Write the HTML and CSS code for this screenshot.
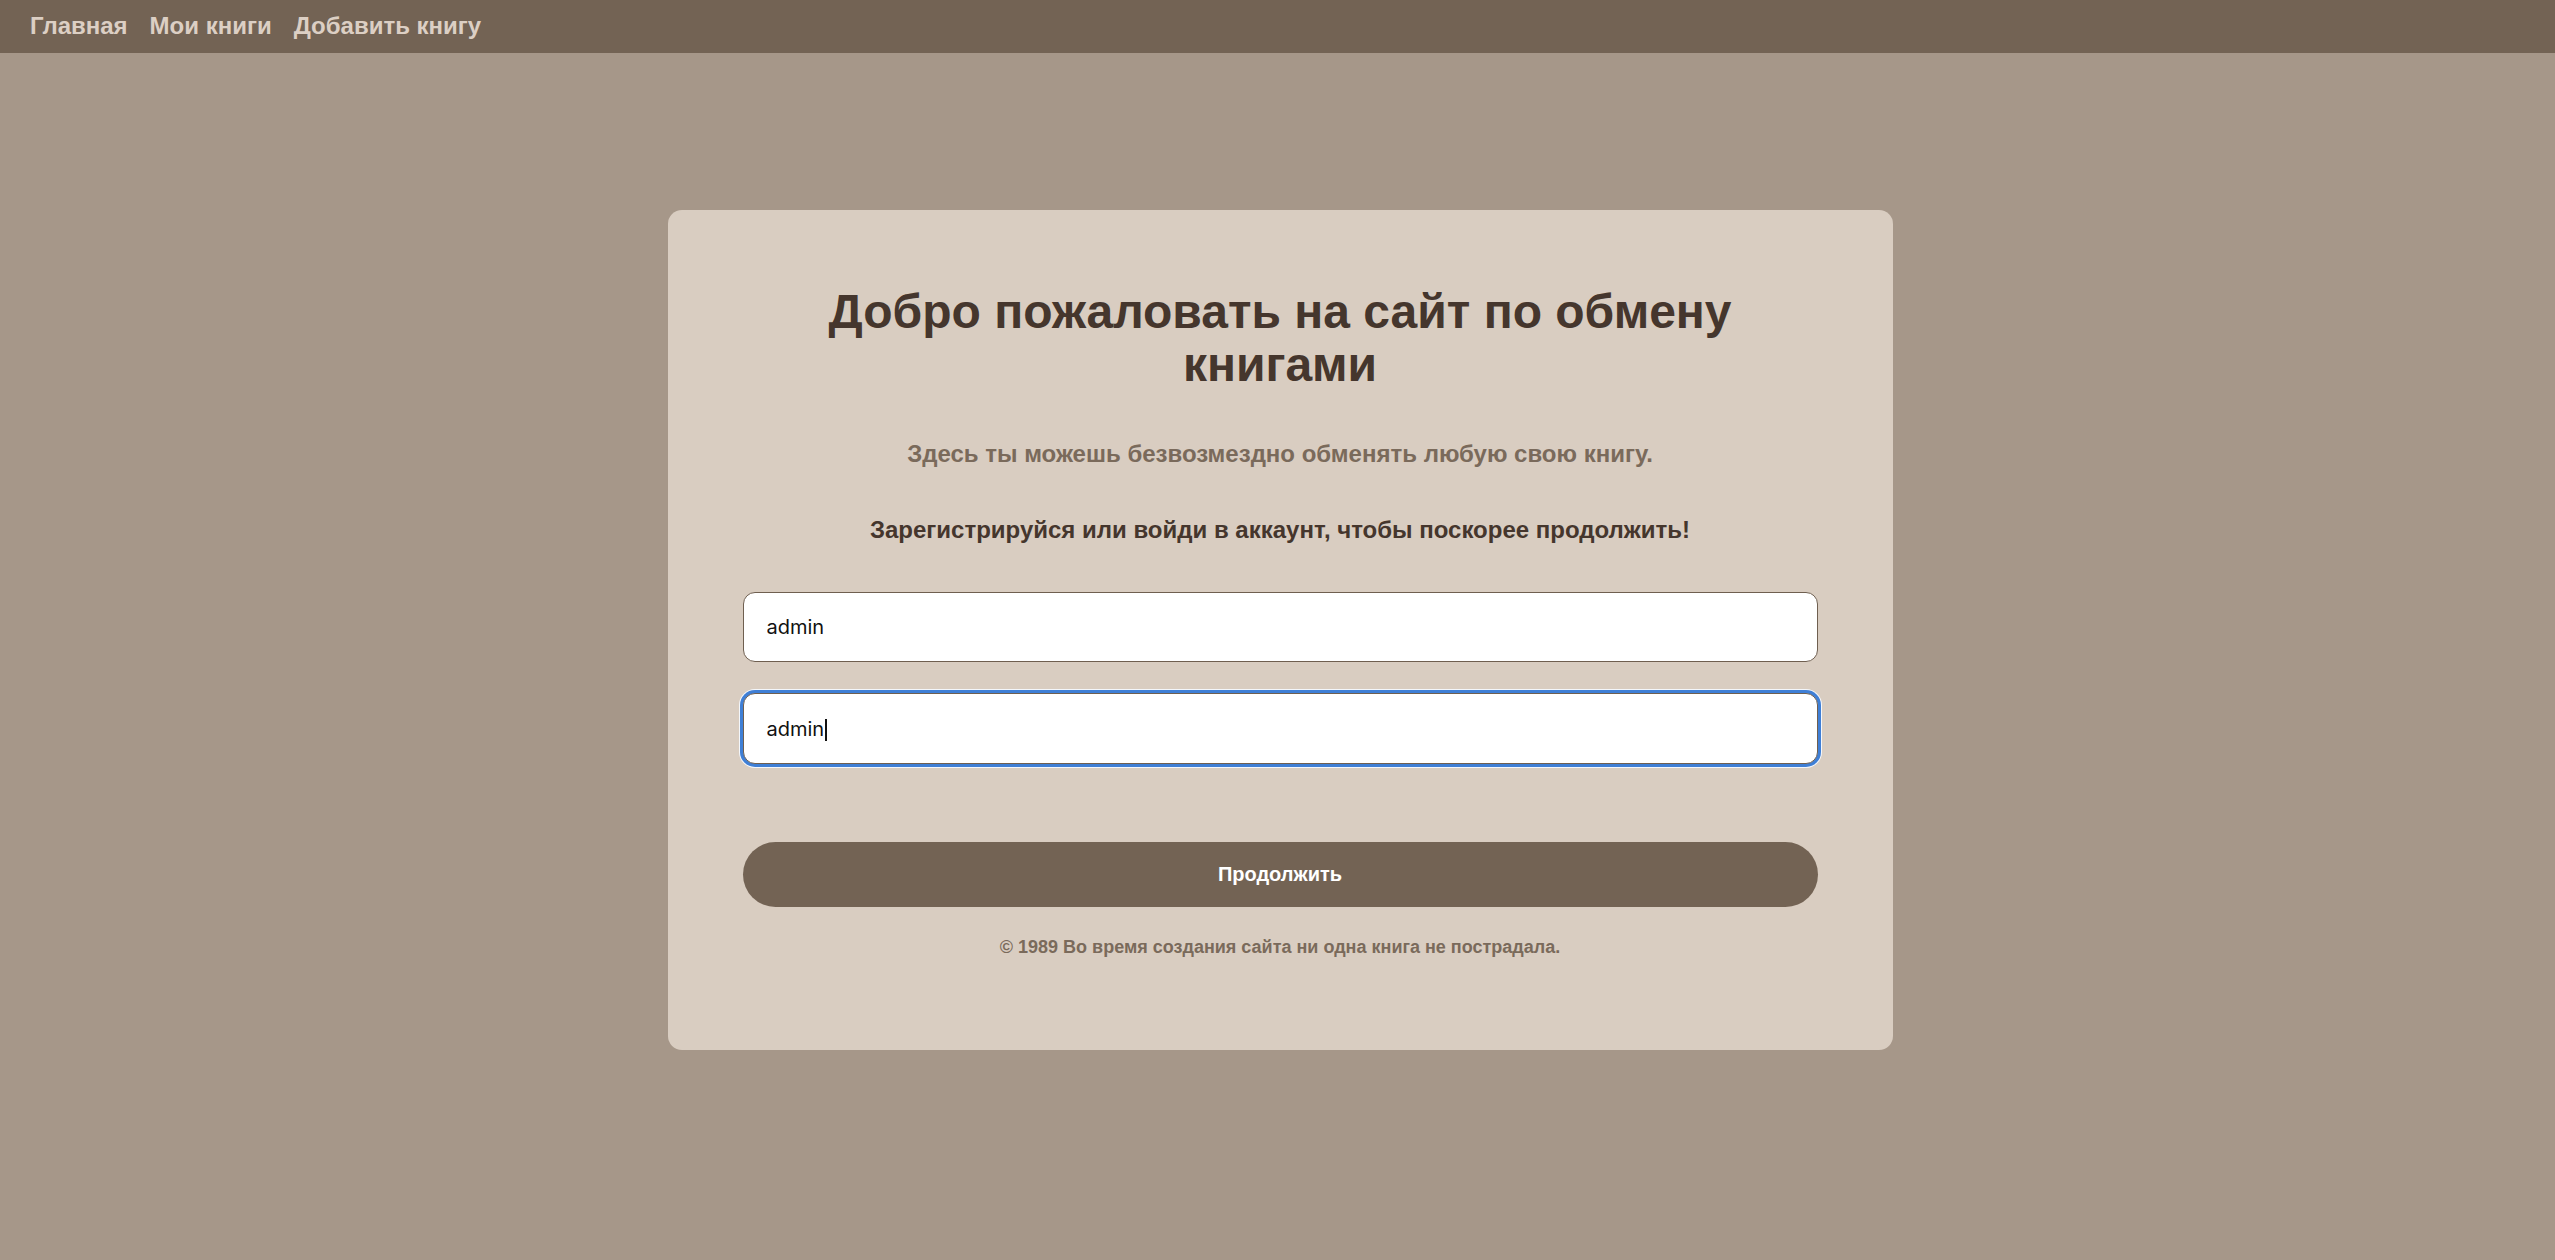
FILE: index.html
```html
<!DOCTYPE html>
<html lang="ru">
<head>
<meta charset="utf-8">
<title>Обмен книгами</title>
<link rel="stylesheet" href="styles.css">
</head>
<body>
<nav class="topnav">
  <a class="topnav__link" href="#">Главная</a>
  <a class="topnav__link" href="#">Мои книги</a>
  <a class="topnav__link" href="#">Добавить книгу</a>
</nav>
<main class="card">
  <h1 class="card__title">Добро пожаловать на сайт по обмену книгами</h1>
  <p class="card__lead">Здесь ты можешь безвозмездно обменять любую свою книгу.</p>
  <p class="card__call">Зарегистрируйся или войди в аккаунт, чтобы поскорее продолжить!</p>
  <form class="form">
    <input class="form__input" type="text" value="admin">
    <div class="form__field">
      <input class="form__input form__input--focused" type="text" value="admin">
      <span class="form__caret"></span>
    </div>
    <button class="form__button" type="button">Продолжить</button>
  </form>
  <p class="card__footer">© 1989 Во время создания сайта ни одна книга не пострадала.</p>
</main>
</body>
</html>
```

FILE: styles.css
```css
html, body {
  margin: 0;
  padding: 0;
}
body {
  background: #a69789;
  font-family: "Liberation Sans", Arial, sans-serif;
  min-height: 1260px;
}
.topnav {
  height: 53px;
  background: #736354;
  display: flex;
  align-items: center;
  gap: 22px;
  padding-left: 30px;
  padding-bottom: 2px;
  box-sizing: border-box;
}
.topnav__link {
  color: #dccfc4;
  text-decoration: none;
  font-weight: bold;
  font-size: 24px;
}
.card {
  width: 1225px;
  box-sizing: border-box;
  margin: 157px 0 0 calc(50% - 610px);
  padding: 75px 75px 75px;
  background: #d9cdc1;
  border-radius: 14px;
  display: flex;
  flex-direction: column;
  align-items: stretch;
}
.card__title {
  margin: 0 auto;
  max-width: 960px;
  font-size: 48px;
  line-height: 53px;
  font-weight: bold;
  text-align: center;
  color: #45362d;
}
.card__lead {
  margin: 49px 0 0;
  font-size: 24px;
  font-weight: bold;
  text-align: center;
  color: #7a6a5b;
}
.card__call {
  margin: 48px 0 0;
  font-size: 24px;
  font-weight: bold;
  text-align: center;
  color: #45362d;
}
.form {
  margin-top: 48px;
  display: flex;
  flex-direction: column;
}
.form__field {
  position: relative;
  margin-top: 31px;
}
.form__input {
  display: block;
  width: 100%;
  box-sizing: border-box;
  height: 70px;
  padding: 0 23px;
  border: 1px solid #6f5f50;
  border-radius: 12px;
  background: #fff;
  font-family: Inter, "Noto Sans", sans-serif;
  font-size: 20px;
  color: #111;
  outline: none;
}
.form__input--focused {
  height: 71px;
  box-shadow: 0 0 0 3px #3f7fd6, 0 0 0 4px #f4f7fb;
}
.form__caret {
  position: absolute;
  left: 82px;
  top: 26px;
  width: 2px;
  height: 22px;
  background: #111;
}
.form__button {
  margin-top: 78px;
  height: 65px;
  border: none;
  border-radius: 33px;
  background: #736354;
  color: #fff;
  font-family: "Liberation Sans", Arial, sans-serif;
  font-weight: bold;
  font-size: 20px;
  cursor: pointer;
}
.card__footer {
  margin: 30px 0 17px;
  font-size: 18px;
  font-weight: bold;
  text-align: center;
  color: #7a6a5b;
}
```
